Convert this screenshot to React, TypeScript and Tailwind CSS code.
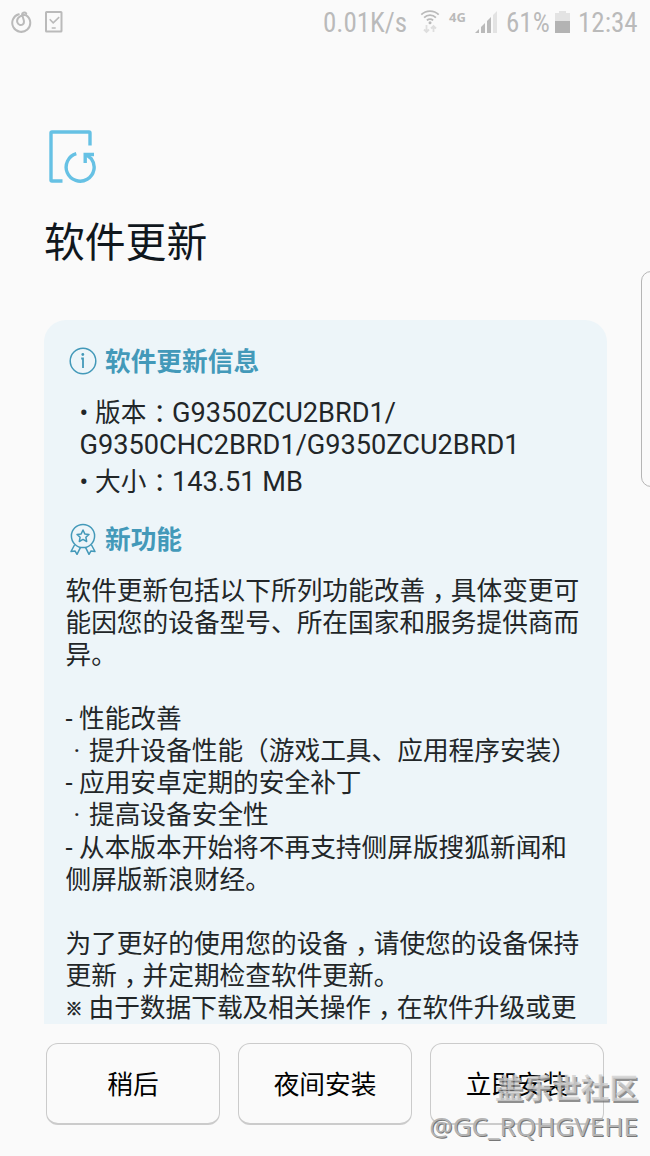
import type { ReactNode } from "react";

const WIFI_ARCS = ["M0.8 4.6a12.4 12.4 0 0 1 17.4 0", "M3.6 7.6a8.4 8.4 0 0 1 11.8 0", "M6.4 10.4a4.6 4.6 0 0 1 6.2 0"];

const NOTES = [
  "软件更新包括以下所列功能改善，具体变更可",
  "能因您的设备型号、所在国家和服务提供商而",
  "异。",
  "",
  "- 性能改善",
  "· 提升设备性能（游戏工具、应用程序安装）",
  "- 应用安卓定期的安全补丁",
  "· 提高设备安全性",
  "- 从本版本开始将不再支持侧屏版搜狐新闻和",
  "侧屏版新浪财经。",
  "",
  "为了更好的使用您的设备，请使您的设备保持",
  "更新，并定期检查软件更新。",
  "※ 由于数据下载及相关操作，在软件升级或更",
];

function renderPart(part: string, key: number) {
  // commas and colons sit in the middle of a full-width box
  if (part === "，" || part === "：") {
    return (
      <span key={key} className="inline-block w-[1em] pl-px text-center [font-feature-settings:'halt']">
        {part}
      </span>
    );
  }
  if (part === "· ") {
    return (
      <span key={key} className="inline-block w-[23.5px] pl-[8px]">
        {part}
      </span>
    );
  }
  if (part === "• ") {
    return (
      <span key={key} className="inline-block w-[15.5px]">
        {part}
      </span>
    );
  }
  if (part === "※ ") {
    return (
      <span key={key} className="relative -top-[2px] inline-block w-[23px] text-[17px] leading-4 font-bold [-webkit-text-stroke:0.6px_currentColor]">
        {part}
      </span>
    );
  }
  if (/^[A-Z0-9]/.test(part)) {
    return (
      <span key={key} className="text-[27.15px]">
        {part}
      </span>
    );
  }
  return part;
}

function Line({ text }: { text: string }) {
  return <div className="h-[32.06px] whitespace-pre">{text.split(/([，：]|· |• |※ |[A-Z0-9][A-Z0-9./ ]+)/).map(renderPart)}</div>;
}

function StatusBar() {
  return (
    <header className="flex h-[46px] items-start justify-between bg-[#fafafa] pt-[9px] pr-[13px] pl-[11px] text-[#bababa]">
      <div className="flex gap-[13px] pt-[2px]">
        <svg width="21" height="22" viewBox="0 0 21 22" fill="none" stroke="currentColor" strokeWidth="2" strokeLinecap="round">
          <path d="M7.8 3.2A9 9 0 1 0 15.3 4.4C13.5 3.7 11.4 4.1 9.5 5.1 6.4 6.8 5.7 9.3 6.4 11.5c.8 2.4 3.5 3.2 5.3 2 1.7-1.1 1.5-3 .8-5.2L11.2 4c-.6-2.2 2.4-3.4 4-1.6" />
        </svg>
        <svg width="18" height="22" viewBox="0 0 18 22" fill="none" stroke="currentColor" strokeWidth="2">
          <rect x="1" y="1" width="15.5" height="19.5" rx="0.6" />
          <path d="M4.7 8.2l3.5 3.6 6-5.6M6.7 17h4" strokeWidth="1.6" />
        </svg>
      </div>
      <div className="flex items-start font-['Roboto_Condensed',Roboto,sans-serif] text-[27px] leading-7 whitespace-nowrap">
        <span className="w-[97px]">0.01K/s</span>
        <svg className="mt-px" width="20" height="24" viewBox="0 0 19 24" fill="none" stroke="currentColor" strokeWidth="1.8">
          {WIFI_ARCS.map((d) => (
            <path key={d} d={d} />
          ))}
          <circle cx="9.5" cy="12.8" r="1.5" fill="currentColor" stroke="none" />
          <path d="M6 15v7M3.5 19.5L6 22l2.5-2.5M13 22v-6M10.5 18.5L13 16l2.5 2.5" stroke="#dedede" />
        </svg>
        <span className="ml-[9px] w-[18px] font-['Open_Sans',sans-serif] text-[13px] leading-4 font-bold">4G</span>
        <svg className="mt-[2px] ml-[8px]" width="23" height="22" viewBox="0 0 23 22" fill="currentColor">
          <path d="M0 22l4-4v4zM6 16l4-4v10H6zM12 10l4-4v16h-4z" />
          <path d="M18 4l4-4v22h-4z" fill="#e3e3e3" />
        </svg>
        <span className="ml-[8px] w-[49px]">61%</span>
        <svg className="mt-[2px]" width="15" height="22" viewBox="0 0 15 22">
          <path d="M4 0h7v2h4v8H0V2h4z" fill="#e3e3e3" />
          <path d="M0 10h15v12H0z" fill="#b3b3b3" />
        </svg>
        <span className="ml-[8px] w-[59px]">12:34</span>
      </div>
    </header>
  );
}

function SectionTitle({ icon, children }: { icon: ReactNode; children: ReactNode }) {
  return (
    <h2 className="flex h-8 items-center gap-[8.5px] pl-[3px] font-bold text-[#4399b9]">
      {icon}
      <span className="pt-[2px] leading-8">{children}</span>
    </h2>
  );
}

function ActionButton({ children }: { children: ReactNode }) {
  return (
    <button className="h-[82px] w-[174px] rounded-xl border border-b-2 border-[#cbcbcb] bg-[#fafafa] pt-[4px] text-[25.7px] text-black">
      {children}
    </button>
  );
}

export default function App() {
  return (
    <div className="relative h-[1156px] w-[650px] overflow-hidden bg-[#fafafa] font-[Roboto,'Noto_Sans_CJK_SC',sans-serif] text-[#222628]">
      <StatusBar />

      <div className="pt-[84px] pl-[49px]">
        <svg width="48" height="54" viewBox="0 0 48 54" fill="none" stroke="#66c1e4" strokeWidth="3.4">
          <path d="M41 15.5V3a1 1 0 0 0-1-1H3a1 1 0 0 0-1 1v47a1 1 0 0 0 1 1h10.5" />
          <path d="M27.3 23.7A14 14 0 1 0 42.3 28.7L37.5 25" />
          <path d="M36.2 33V24.5H45" />
        </svg>
      </div>
      <h1 className="mt-[29px] ml-[44px] h-[61px] text-[40.8px] leading-[61px] text-[#10171d]">软件更新</h1>

      <main className="mt-[46px] ml-[43.5px] h-[704px] w-[563px] overflow-hidden rounded-t-[22px] bg-[#edf5f9] pt-[25px] pl-[22px] text-[25.7px] leading-8">
        <SectionTitle
          icon={
            <svg width="28" height="28" viewBox="0 0 28 28" fill="none" stroke="currentColor" strokeWidth="1.5">
              <circle cx="14" cy="14" r="12.8" />
              <path d="M12.2 11.5H14V21" strokeWidth="1.8" />
              <circle cx="13.8" cy="7.5" r="1.4" fill="currentColor" stroke="none" />
            </svg>
          }
        >
          软件更新信息
        </SectionTitle>
        <div className="mt-[20px] pl-[14px]">
          <Line text="• 版本：G9350ZCU2BRD1/" />
          <Line text="G9350CHC2BRD1/G9350ZCU2BRD1" />
          <div className="mt-[4.5px]">
            <Line text="• 大小：143.51 MB" />
          </div>
        </div>

        <div className="mt-[25.3px]">
          <SectionTitle
            icon={
              <svg width="28" height="32" viewBox="0 0 28 32" fill="none" stroke="currentColor" strokeWidth="1.5" strokeLinejoin="round">
                <circle cx="14" cy="13" r="11.6" />
                <path d="M14 7l1.8 3.9 4.2.5-3.1 2.9.8 4.2-3.7-2.1-3.7 2.1.8-4.2L8 11.4l4.2-.5z" />
                <path d="M5.5 22L2 28.5l4-.6 2 3.4 3.5-7M22.5 22L26 28.5l-4-.6-2 3.4-3.5-7" />
              </svg>
            }
          >
            新功能
          </SectionTitle>
        </div>
        <div className="mt-[20.2px]">
          {NOTES.map((text, i) => (
            <Line key={i} text={text} />
          ))}
        </div>
      </main>

      <footer className="mt-[19px] flex gap-[18px] pl-[46px]">
        <ActionButton>稍后</ActionButton>
        <ActionButton>夜间安装</ActionButton>
        <ActionButton>立即安装</ActionButton>
      </footer>

      {/* edge panel handle */}
      <div className="absolute top-[271px] left-[641px] h-[216px] w-5 rounded-[10px] border border-[#b5b5b5]" />

      {/* community watermark */}
      <div className="absolute top-[1069px] right-[12px] text-right">
        <div className="text-[28.6px] leading-10 font-bold text-[#cfcfcf]/80 [text-shadow:1.5px_1.5px_0_#777777d0]">盖乐世社区</div>
        <div className="-mt-px font-['Noto_Sans',sans-serif] text-[26px] leading-9 text-[#b4b4b4] [text-shadow:1px_1px_0_#777]">@GC_RQHGVEHE</div>
      </div>
    </div>
  );
}
